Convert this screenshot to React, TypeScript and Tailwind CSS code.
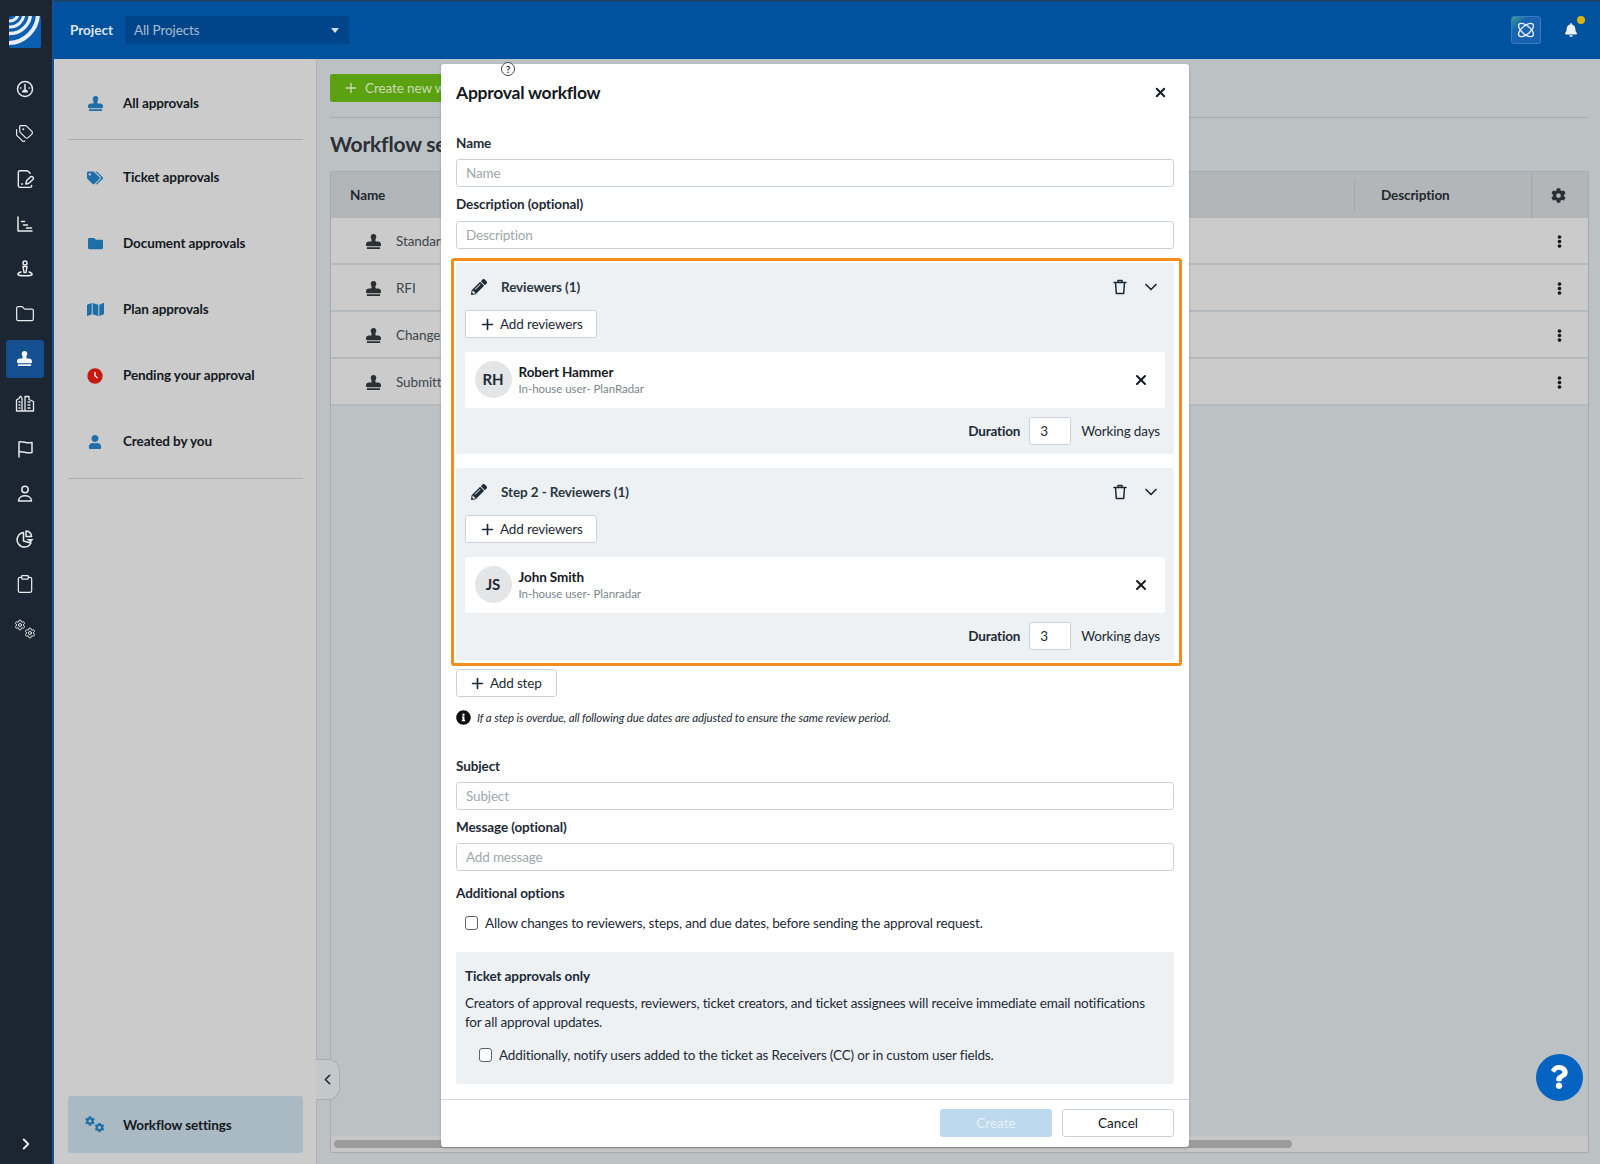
import React from "react";
import { FaStamp, FaTags, FaFolder, FaMap, FaUser, FaCog, FaPencilAlt, FaInfoCircle, FaBell, FaEllipsisV, FaQuestion } from "react-icons/fa";
import { ChevronDown, ChevronLeft, ChevronRight, Plus, X, Tags, FileSignature, Folder, Clipboard, Settings } from "lucide-react";

const s = { fill: "none", stroke: "#e8ebee", strokeWidth: 1.5, strokeLinecap: "round", strokeLinejoin: "round" } as const;

function RailSvg({ children }: { children: React.ReactNode }) {
  return <svg width="20" height="20" viewBox="0 0 20 20" {...s}>{children}</svg>;
}

function Logo() {
  return (
    <svg width="32" height="32" viewBox="0 0 32 32" className="block">
      <defs><clipPath id="lg"><rect width="32" height="32" rx="2" /></clipPath></defs>
      <g clipPath="url(#lg)">
        <rect width="32" height="32" fill="#0c5fb0" />
        <g fill="none" stroke="#e8eef4">
          <circle cx="1" cy="-3" r="8" strokeWidth="3" />
          <circle cx="1" cy="-3" r="14" strokeWidth="3" />
          <circle cx="1" cy="-3" r="20.500" strokeWidth="3.400" />
          <circle cx="-1" cy="-3" r="30" strokeWidth="4" />
        </g>
      </g>
    </svg>
  );
}

const railIcons: React.ReactNode[] = [
  <RailSvg key="g"><circle cx="10" cy="10" r="7.500" /><path d="M10 10.500V5.500M5.500 9h.4M14.100 9h.4" /><path d="M7 13.500a3 3 0 0 1 6 0z" fill="#e8ebee" stroke="none" /></RailSvg>,
  <Tags key="t" size={19} color="#e8ebee" strokeWidth={1.5} />,
  <FileSignature key="f" size={20} color="#e8ebee" strokeWidth={1.7} />,
  <RailSvg key="c"><path d="M3 3v14h14M6.500 7.500h3M8.500 11h4M11.500 14h5" /></RailSvg>,
  <RailSvg key="p"><circle cx="10" cy="4" r="2" /><path d="M8 7.500h4l-1 6h-2z" /><path d="M6 13c-2 .6-3.500 1.400-3 2.600.6 1.400 13.400 1.400 14 0 .5-1.200-1-2-3-2.600" /></RailSvg>,
  <Folder key="fo" size={20} color="#e8ebee" strokeWidth={1.5} />,
  <FaStamp key="st" size={15} color="#f4f6f8" />,
  <RailSvg key="b"><path d="M1.500 17V6l2.500-1.500 1-2h1l1 2V17zM1.500 17H18.500V7.500L14 5.500V2.500H10V17M4 8h1M4 11h1M4 14h1M13 8h2M13 11h2M13 14h2" strokeWidth="1.300" /></RailSvg>,
  <RailSvg key="fl"><path d="M4 18V3c4-1 8 2 13 .5v10c-5 1.500-9-1.500-13-.5" /></RailSvg>,
  <RailSvg key="u"><circle cx="10" cy="5.500" r="3.200" /><path d="M3.500 17c0-7 13-7 13 0z" /></RailSvg>,
  <RailSvg key="pi"><path d="M8.500 3.500a7.300 7.300 0 1 0 7.500 10.500l-7.500-2z" /><path d="M11 2c3 .3 5.300 2.600 5.600 5.500H11z" /><path d="M11.500 10h7l-2.800 3.500z" fill="#e8ebee" stroke="none" /></RailSvg>,
  <Clipboard key="cl" size={20} color="#e8ebee" strokeWidth={1.5} />,
  <svg key="se" width="20" height="20" viewBox="0 0 20 20">
    <Settings x={-1} y={0} width={12} height={12} color="#e8ebee" strokeWidth={2} />
    <Settings x={9} y={8} width={12} height={12} color="#e8ebee" strokeWidth={2} />
  </svg>,
];

function Rail() {
  return (
    <aside className="w-[54px] shrink-0 h-full bg-[#1c2632] border-r-2 border-[#17508f] flex flex-col items-center pt-[16px] pb-[11px] pr-[3px]">
      <Logo />
      <div className="mt-[22px] flex flex-col items-center">
        {railIcons.map((ic, i) => (
          <div key={i} className={`w-[38px] h-[37.500px] flex items-center justify-center mb-[7.500px] rounded-[3px] ${i === 6 ? "bg-[#154f8f]" : ""}`}>
            {ic}
          </div>
        ))}
      </div>
      <ChevronRight size={18} color="#f2f4f6" strokeWidth={2.500} className="mt-auto ml-[3px]" />
    </aside>
  );
}

function TopBar() {
  return (
    <header className="h-[59px] shrink-0 bg-[#00519e] border-t-2 border-[#1b4269] flex items-center pl-[16px] pr-[19px] pb-px">
      <span className="text-[13.500px] font-bold text-[#dce5ef] w-[55px]">Project</span>
      <div className="w-[224px] h-[28px] bg-[#00448a] rounded-[2px] flex items-center justify-between px-[9px] text-[13.500px] tracking-[-0.1px] text-[#a9bdd3]">
        <span>All Projects</span>
        <span className="w-0 h-0 border-l-[4.500px] border-r-[4.500px] border-t-[5px] border-l-transparent border-r-transparent border-t-[#d5dfea] mr-[1px]" />
      </div>
      <div className="ml-auto w-[30px] h-[28px] rounded-[3px] border border-[#3a7cc0] bg-gradient-to-br from-[#3f9a7e] via-[#1a64b4] via-30% to-[#1560ad] flex items-center justify-center">
        <svg width="20" height="20" viewBox="0 0 20 20" fill="none" stroke="#e6eef6" strokeWidth="1.400">
          <ellipse cx="10" cy="10" rx="9" ry="4.200" transform="rotate(40 10 10)" />
          <ellipse cx="10" cy="10" rx="9" ry="4.200" transform="rotate(-40 10 10)" />
        </svg>
      </div>
      <div className="relative ml-[20px] w-[20px] h-[20px] flex items-center justify-center">
        <FaBell size={14} color="#eef2f6" />
        <span className="absolute -top-[4px] right-[-4px] w-[8px] h-[8px] rounded-full bg-[#d8b414]" />
      </div>
    </header>
  );
}

function NavItem({ icon, label, cls = "h-[66px]" }: { icon: React.ReactNode; label: string; cls?: string }) {
  return (
    <div className={`${cls} flex items-center`}>
      <div className="w-[55px] pr-[1px] flex justify-center">{icon}</div>
      <span className="text-[13.500px] font-bold text-[#14191e] tracking-[-0.1px]">{label}</span>
    </div>
  );
}

function Cogs({ color }: { color: string }) {
  return (
    <svg width="20" height="18" viewBox="0 0 20 18" color={color}>
      <svg x={0} y={0} width={10} height={10}><FaCog size={10} /></svg>
      <svg x={9.500} y={6.500} width={10} height={10}><FaCog size={10} /></svg>
    </svg>
  );
}

function SidePanel() {
  const blue = "#1e6fa8";
  return (
    <nav className="w-[263px] shrink-0 h-full bg-[#cbcbcb] border-r border-[#aeb3b7] pl-[14px] pr-[13px] pt-[11.500px] flex flex-col relative">
      <NavItem cls="h-[65px]" icon={<FaStamp size={15} color={blue} />} label="All approvals" />
      <div className="mt-[3.500px] h-px bg-[#a9aeb4]" />
      <div className="pt-[4.500px]">
        <NavItem icon={<FaTags size={16} color={blue} />} label="Ticket approvals" />
        <NavItem icon={<FaFolder size={15} color={blue} />} label="Document approvals" />
        <NavItem icon={<FaMap size={17} color={blue} />} label="Plan approvals" />
        <NavItem
          icon={
            <svg width="16" height="16" viewBox="0 0 16 16">
              <circle cx="8" cy="8" r="7.700" fill="#c41a12" />
              <path d="M8 4v4l2.500 2" fill="none" stroke="#fff" strokeWidth="1.300" />
            </svg>
          }
          label="Pending your approval"
        />
        <NavItem icon={<FaUser size={14} color={blue} />} label="Created by you" />
      </div>
      <div className="mt-[3px] h-px bg-[#a6b1b8]" />
      <div className="mt-auto mb-[11px] h-[57px] pt-px rounded-[3px] bg-[#a9bac5] flex items-center">
        <div className="w-[55px] pr-[1px] flex justify-center"><Cogs color={blue} /></div>
        <span className="text-[13.500px] font-bold text-[#14191e] tracking-[-0.1px]">Workflow settings</span>
      </div>
      <div className="absolute right-[-24px] top-[1000px] w-[24px] h-[41px] bg-[#c3c8ca] border border-l-0 border-[#a9aeb2] rounded-r-[12px] flex items-center justify-center">
        <ChevronLeft size={17} color="#20272e" strokeWidth={2.300} />
      </div>
    </nav>
  );
}

const rows = ["Standard approval", "RFI", "Change order", "Submittal"];

function Main() {
  return (
    <main className="flex-1 min-w-0 h-full pl-[13px] pr-[11px] pt-[15px] pb-[11px] flex flex-col">
      <div className="h-[28px] w-[200px] rounded-[3px] bg-[#5ba112] text-[#c8dcb2] text-[13.500px] tracking-[-0.1px] flex items-center pl-[13px] gap-[6px]">
        <Plus size={16} strokeWidth={2} />
        <span>Create new workflow</span>
      </div>
      <div className="mt-[15px] h-px bg-[#a8adb2]" />
      <h1 className="mt-[13px] h-[26px] leading-[26px] text-[21px] tracking-[-0.2px] font-bold text-[#2b3035]">Workflow settings</h1>
      <section className="mt-[14px] flex-1 flex flex-col border border-[#a6abb0] rounded-[2px]">
        <div className="h-[46px] bg-[#b2b6b9] flex items-center text-[13.500px] tracking-[-0.1px] font-bold text-[#22282d]">
          <span className="pl-[19px] w-[1023px]">Name</span>
          <div className="h-[33px] w-px bg-[#a2a7ab]" />
          <span className="pl-[26px] w-[176px]">Description</span>
          <div className="h-full w-px bg-[#a2a7ab]" />
          <div className="flex-1 flex justify-center pr-[3px]"><FaCog size={15} color="#2b3035" /></div>
        </div>
        {rows.map((r) => (
          <div key={r} className="h-[47px] pt-[2px] bg-[#cbcbcb] border-b-2 border-[#b5babe] flex items-center text-[13.500px] tracking-[-0.1px] text-[#3e454b]">
            <div className="w-[65px] pl-[35px]"><FaStamp size={15} color="#2b3035" /></div>
            <span>{r}</span>
            <div className="ml-auto mr-[22px]"><FaEllipsisV size={13} color="#15191d" /></div>
          </div>
        ))}
        <div className="flex-1" />
        <div className="h-[16px] bg-[#c6c6c6] flex items-center px-[3px]">
          <div className="w-[958px] h-[8px] rounded-full bg-[#9b9b9b]" />
        </div>
      </section>
    </main>
  );
}

const labelCls = "block text-[13.500px] leading-[20px] font-bold text-[#1d2a35] tracking-[-0.1px]";
const bodyCls = "text-[13.500px] tracking-[-0.16px] text-[#1d2a35]";
const inputCls = "block w-full h-[28px] border border-[#ccd2d8] rounded-[3px] px-[9px] text-[13.500px] tracking-[-0.16px] bg-white text-[#1d2a35] placeholder:text-[#a0a7ad] outline-none";

function Trash() {
  return (
    <svg width="14" height="16" viewBox="0 0 14 16" fill="none" stroke="#1d2a35" strokeWidth="1.500" strokeLinejoin="round" strokeLinecap="round">
      <path d="M1 3.500h12M5 3.500V1.500h4v2M2.500 3.500l.8 11h7.400l.8-11" />
    </svg>
  );
}

function Step({ title, initials, name, org, pb }: { title: string; initials: string; name: string; org: string; pb: string }) {
  return (
    <div className={`bg-[#edf1f4] rounded-[3px] px-[9px] ${pb}`}>
      <div className="h-[47px] flex items-center">
        <div className="w-[27px] pl-[6px]"><FaPencilAlt size={16} color="#1d2a35" /></div>
        <span className="ml-[9px] mt-[1.500px] text-[13.500px] font-bold text-[#2b3640] tracking-[-0.1px]">{title}</span>
        <div className="ml-auto mr-[14px]"><Trash /></div>
        <ChevronDown size={20} color="#1d2a35" strokeWidth={2} className="mr-[4px]" />
      </div>
      <button className="w-[132px] h-[28px] bg-white border border-[#ccd2d8] rounded-[3px] flex items-center pl-[13px] gap-[4px] text-[13.500px] tracking-[-0.16px] text-[#1d2a35]">
        <Plus size={17} strokeWidth={2.300} color="#1d2a35" />
        <span>Add reviewers</span>
      </button>
      <div className="mt-[14px] h-[56px] bg-white rounded-[3px] flex items-center pl-[9.500px] pr-[16px]">
        <div className="w-[37px] h-[37px] rounded-full bg-[#e3e5e7] flex items-center justify-center text-[15px] font-bold text-[#1d2a35] -mt-px">{initials}</div>
        <div className="ml-[7px]">
          <div className="text-[13.500px] leading-[18px] font-bold text-[#14191e] tracking-[-0.1px] -mt-[1px]">{name}</div>
          <div className="text-[11.500px] leading-[16px] tracking-[-0.05px] text-[#7d868d]">{org}</div>
        </div>
        <X size={16} strokeWidth={3} color="#14191e" className="ml-auto" />
      </div>
      <div className={`mt-[9px] h-[28px] flex items-center justify-end pr-[5px] ${bodyCls}`}>
        <span className="font-bold">Duration</span>
        <div className="ml-[9px] w-[42px] h-[28px] bg-white border border-[#ccd2d8] rounded-[3px] flex items-center pl-[10px]">3</div>
        <span className="ml-[10px]">Working days</span>
      </div>
    </div>
  );
}

function Modal() {
  return (
    <div className="absolute left-[441px] top-[64px] w-[748px] h-[1083px] bg-white rounded-[3px] shadow-[0_1px_3px_rgba(0,0,0,0.2)] px-[15px] flex flex-col">
      <div className="absolute left-[60px] top-[-2px] w-[14px] h-[14px] rounded-full border border-[#3b4550] bg-white flex items-center justify-center text-[10px] font-bold text-[#1d2a35]">?</div>
      <div className="mt-[17px] h-[24px] flex items-center justify-between">
        <h2 className="text-[17.500px] font-bold text-[#14191e] tracking-[-0.25px]">Approval workflow</h2>
        <X size={15} strokeWidth={3} color="#14191e" className="mr-[6px] -mt-px" />
      </div>
      <label className={`${labelCls} mt-[28px]`}>Name</label>
      <input className={`${inputCls} mt-[6px]`} placeholder="Name" />
      <label className={`${labelCls} mt-[7px]`}>Description (optional)</label>
      <input className={`${inputCls} mt-[7px]`} placeholder="Description" />

      <div className="mt-[9px] -ml-[5px] -mr-[8px] border-[3px] border-[#f28d1e] rounded-[3px] pl-[2px] pr-[5px] pt-[2px] pb-[3px] flex flex-col gap-[14px]">
        <Step pb="pb-[9px]" title="Reviewers (1)" initials="RH" name="Robert Hammer" org="In-house user- PlanRadar" />
        <Step pb="pb-[10px]" title="Step 2 - Reviewers (1)" initials="JS" name="John Smith" org="In-house user- Planradar" />
      </div>

      <button className="mt-[3px] w-[101px] h-[28px] bg-white border border-[#ccd2d8] rounded-[3px] flex items-center pl-[12px] gap-[4px] text-[13.500px] tracking-[-0.16px] text-[#1d2a35]">
        <Plus size={17} strokeWidth={2.300} color="#1d2a35" />
        <span>Add step</span>
      </button>
      <div className="mt-[13px] h-[16px] flex items-center gap-[6px]">
        <FaInfoCircle size={15} color="#0d0f12" className="-mt-[2px]" />
        <span className="text-[11.500px] tracking-[-0.1px] italic text-[#1d2a35]">If a step is overdue, all following due dates are adjusted to ensure the same review period.</span>
      </div>

      <label className={`${labelCls} mt-[30px]`}>Subject</label>
      <input className={`${inputCls} mt-[6px]`} placeholder="Subject" />
      <label className={`${labelCls} mt-[7px]`}>Message (optional)</label>
      <input className={`${inputCls} mt-[6px]`} placeholder="Add message" />
      <div className={`${labelCls} mt-[12px]`}>Additional options</div>
      <label className={`mt-[10px] ml-[9px] h-[20px] flex items-center gap-[7px] ${bodyCls}`}>
        <input type="checkbox" className="appearance-none w-[13px] h-[14px] border border-[#59626a] rounded-[3px] bg-white" />
        <span>Allow changes to reviewers, steps, and due dates, before sending the approval request.</span>
      </label>

      <div className="mt-[19px] h-[132px] bg-[#edf1f4] rounded-[3px] px-[9px] pt-[14px]">
        <div className={labelCls}>Ticket approvals only</div>
        <p className={`mt-[8px] pr-[20px] leading-[19px] ${bodyCls}`}>
          Creators of approval requests, reviewers, ticket creators, and ticket assignees will receive immediate email notifications for all approval updates.
        </p>
        <label className={`mt-[13px] ml-[14px] h-[20px] flex items-center gap-[7px] ${bodyCls}`}>
          <input type="checkbox" className="appearance-none w-[13px] h-[14px] border border-[#59626a] rounded-[3px] bg-white" />
          <span>Additionally, notify users added to the ticket as Receivers (CC) or in custom user fields.</span>
        </label>
      </div>

      <div className="mt-[15px] -mx-[15px] border-t border-[#d2d7dc] pt-[9px] pr-[15px] flex justify-end gap-[10px]">
        <button className="w-[112px] h-[28px] rounded-[3px] bg-[#bcd9ee] text-[13.500px] text-[#e8f2f9]">Create</button>
        <button className="w-[112px] h-[28px] rounded-[3px] bg-white border border-[#ccd2d8] text-[13.500px] text-[#14191e]">Cancel</button>
      </div>
    </div>
  );
}

export default function App() {
  return (
    <div className="relative w-[1600px] h-[1164px] overflow-hidden flex bg-[#bcc1c4] [font-family:Lato,sans-serif]">
      <Rail />
      <div className="flex-1 min-w-0 h-full flex flex-col">
        <TopBar />
        <div className="flex-1 min-h-0 flex">
          <SidePanel />
          <Main />
        </div>
      </div>
      <Modal />
      <button className="absolute left-[1535.500px] top-[1053.500px] w-[47px] h-[47px] rounded-full bg-[#0563c1] flex items-center justify-center">
        <FaQuestion size={24} color="#fff" />
      </button>
    </div>
  );
}
